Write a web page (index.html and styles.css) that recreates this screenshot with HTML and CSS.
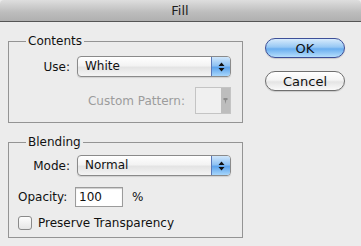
FILE: index.html
```html
<!DOCTYPE html>
<html lang="en">
<head>
  <meta charset="UTF-8">
  <title>Fill</title>
  <link rel="stylesheet" href="styles.css">
</head>
<body>
  <div class="window">
    <div class="titlebar">Fill</div>

    <div class="content">
      <div class="left">
        <!-- Contents -->
        <fieldset class="group contents">
          <legend>Contents</legend>
          <div class="row">
            <span class="label">Use:</span>
            <div class="popup">
              <span class="popup-text">White</span>
              <span class="popup-arrows">
                <svg width="7" height="10" viewBox="0 0 7 10"><path d="M3.5 0.5 L6.5 4 L0.5 4 Z M0.5 6 L6.5 6 L3.5 9.5 Z" fill="#111"/></svg>
              </span>
            </div>
          </div>
          <div class="row pattern-row">
            <span class="label disabled">Custom Pattern:</span>
            <div class="pattern">
              <span class="pattern-swatch"></span>
              <span class="pattern-arrow">
                <svg width="5" height="8" viewBox="0 0 5 8"><path d="M0.5 1 L4.5 1 L4.5 3 L3.3 3 L2.5 7 L1.7 3 L0.5 3 Z" fill="#8c8c8c"/></svg>
              </span>
            </div>
          </div>
        </fieldset>

        <!-- Blending -->
        <fieldset class="group blending">
          <legend>Blending</legend>
          <div class="row">
            <span class="label">Mode:</span>
            <div class="popup">
              <span class="popup-text">Normal</span>
              <span class="popup-arrows">
                <svg width="7" height="10" viewBox="0 0 7 10"><path d="M3.5 0.5 L6.5 4 L0.5 4 Z M0.5 6 L6.5 6 L3.5 9.5 Z" fill="#111"/></svg>
              </span>
            </div>
          </div>
          <div class="row opacity-row">
            <span class="opacity-label">Opacity:</span>
            <input class="opacity-input" type="text" value="100">
            <span class="percent">%</span>
          </div>
          <label class="check-row">
            <span class="checkbox"></span>
            <span>Preserve Transparency</span>
          </label>
        </fieldset>
      </div>

      <div class="buttons">
        <button class="btn btn-ok">OK</button>
        <button class="btn">Cancel</button>
      </div>
    </div>
  </div>
</body>
</html>
```

FILE: styles.css
```css
body {
  margin: 0;
  background: #ececec;
  font-family: "DejaVu Sans", "Liberation Sans", sans-serif;
  font-size: 12px;
  color: #111;
}
.window {
  width: 361px;
  height: 246px;
  background: #ececec;
  overflow: hidden;
}
.titlebar {
  height: 21px;
  line-height: 21px;
  text-align: center;
  font-size: 13px;
  color: #1e1e1e;
  background: linear-gradient(#dedede, #bcbcbc 60%, #b0b0b0);
  border-bottom: 1px solid #555;
  border-radius: 4px 4px 0 0;
  padding-right: 1px;
}
.content {
  display: flex;
  padding: 12px 0 0 8px;
}
.left {
  width: 235px;
}

/* Gruppenrahmen */
.group {
  margin: 0;
  padding: 0 11px 0 0;
  border: 1px solid #949494;
  min-width: 0;
}
.group legend {
  margin-left: 17px;
  padding: 0 2px;
  line-height: 14px;
  color: #111;
}
.contents {
  padding-top: 8px;
  padding-bottom: 8px;
}
.blending {
  margin-top: 12px;
  padding-top: 6px;
  padding-bottom: 7px;
}

.row {
  display: flex;
  align-items: center;
}
.label {
  width: 61px;
  text-align: right;
  margin-right: 7px;
}
.disabled {
  color: #9c9c9c;
  width: auto;
}

/* Popup-Menue */
.popup {
  flex: 1;
  height: 19px;
  display: flex;
  border: 1px solid #8a8a8a;
  border-radius: 4px;
  background: linear-gradient(#ffffff, #f3f3f3 45%, #e4e4e4 55%, #f4f4f4);
  box-shadow: 0 1px 1px rgba(0,0,0,0.12);
  overflow: hidden;
}
.popup-text {
  flex: 1;
  line-height: 19px;
  padding-left: 7px;
}
.popup-arrows {
  width: 18px;
  display: flex;
  align-items: center;
  justify-content: center;
  border-left: 1px solid #5a78b8;
  background: linear-gradient(#cfe6fb, #8fc2f3 45%, #5ea4ec 55%, #a7d6fb);
}

.pattern-row {
  justify-content: flex-end;
  margin-top: 10px;
}
.pattern-row .label {
  margin-right: 10px;
}
.pattern {
  width: 34px;
  height: 25px;
  display: flex;
  border: 1px solid #c4c4c4;
  background: #f0f0f0;
}
.pattern-swatch {
  flex: 1;
}
.pattern-arrow {
  width: 9px;
  display: flex;
  align-items: center;
  justify-content: center;
  background: #bdbdbd;
}

.opacity-row {
  margin-top: 11px;
  padding-left: 9px;
}
.opacity-label {
  width: 57px;
}
.opacity-input {
  width: 40px;
  height: 18px;
  margin: 0;
  padding: 0 3px;
  border: 1px solid #9b9b9b;
  box-shadow: inset 0 1px 1px rgba(0,0,0,0.2);
  font: inherit;
  color: #111;
  background: #fff;
}
.percent {
  margin-left: 9px;
}

.check-row {
  display: flex;
  align-items: center;
  margin-top: 9px;
  padding-left: 9px;
}
.checkbox {
  width: 12px;
  height: 12px;
  margin-right: 6px;
  border: 1px solid #8a8a8a;
  border-radius: 3px;
  background: linear-gradient(#fdfdfd, #e6e6e6);
}

/* Buttons */
.buttons {
  display: flex;
  flex-direction: column;
  gap: 13px;
  margin-left: 22px;
  margin-top: 4px;
}
.btn {
  width: 80px;
  height: 20px;
  padding: 0;
  border: 1px solid #6f6f6f;
  border-radius: 10px;
  background: linear-gradient(#ffffff, #f4f4f4 45%, #e4e4e4 55%, #fafafa);
  font: inherit;
  font-size: 13px;
  color: #111;
  box-shadow: 0 1px 1px rgba(0,0,0,0.15);
}
.btn-ok {
  border-color: #3d4f98;
  background: linear-gradient(#d7ebfc, #97c8f4 45%, #6aaeef 55%, #b5defc);
}
```
